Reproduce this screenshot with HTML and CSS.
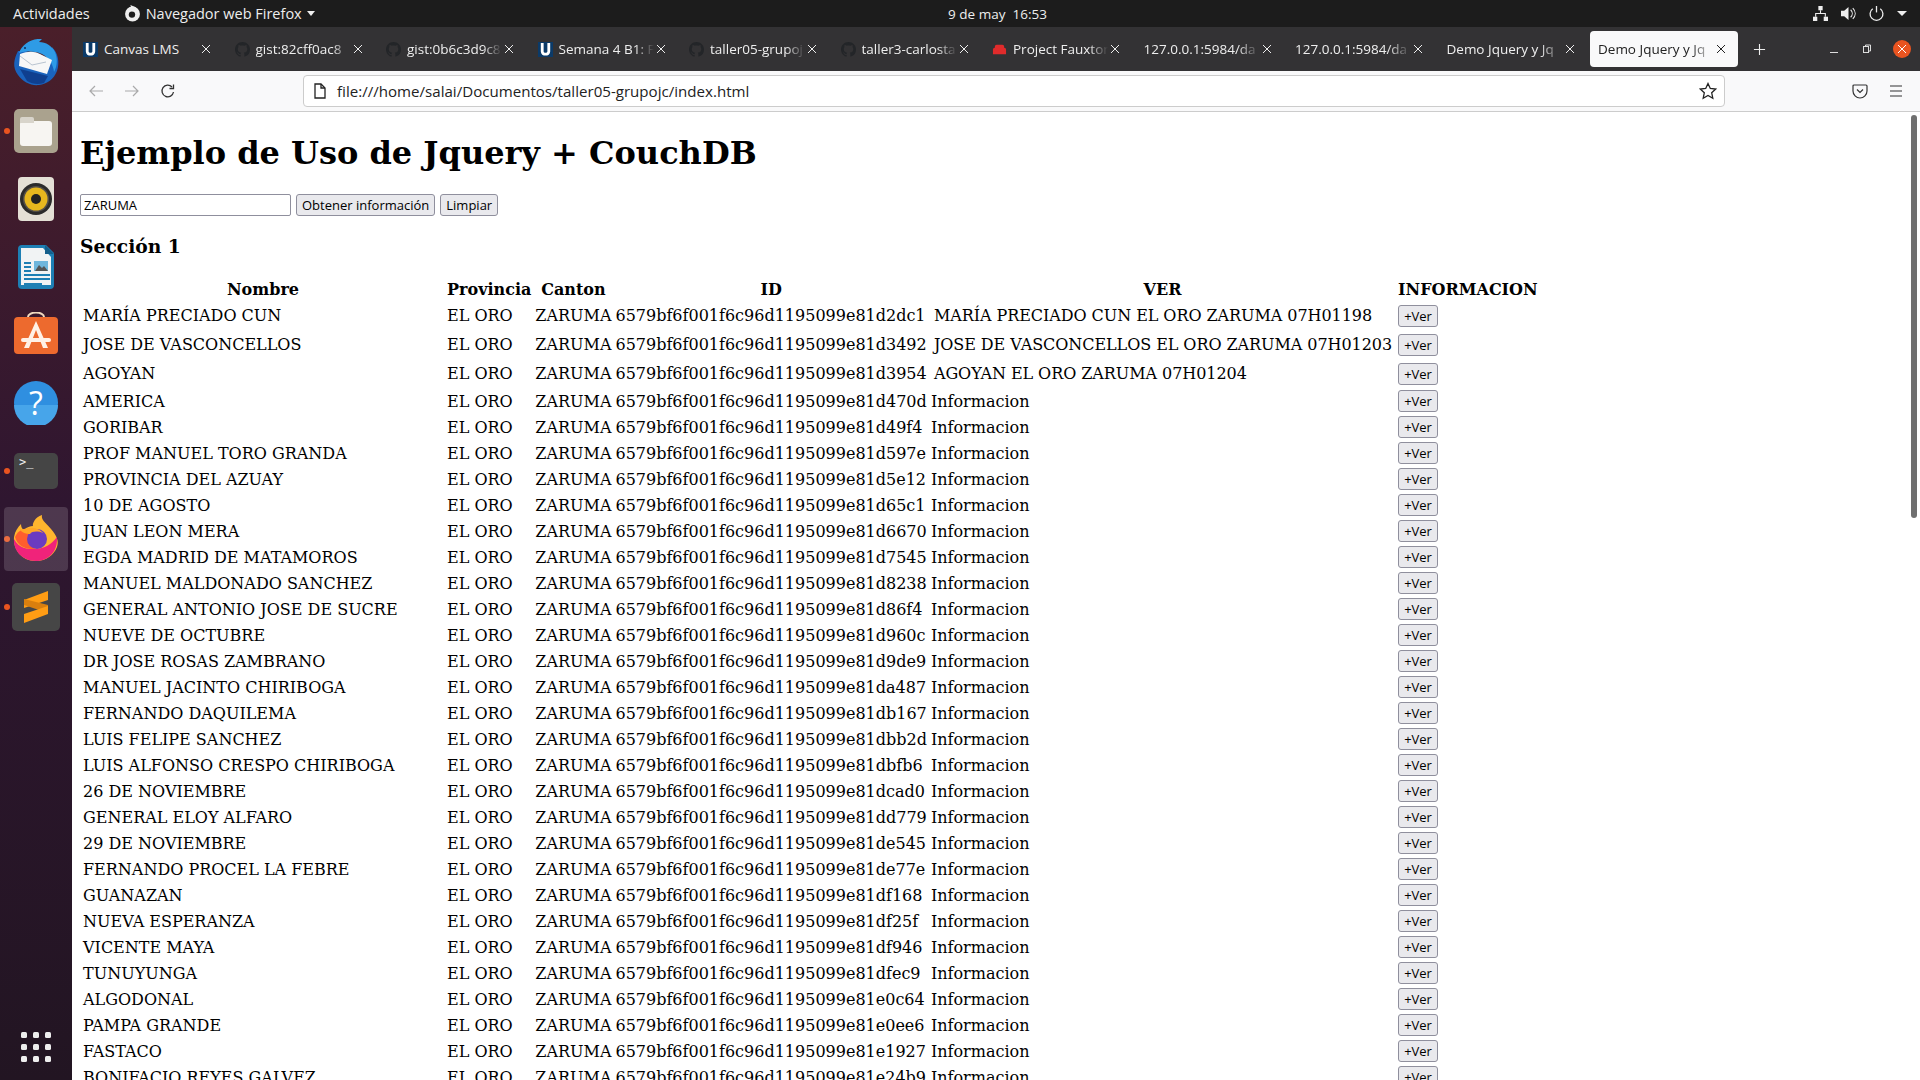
FILE: index.html
```html
<!DOCTYPE html>
<html lang="es">
<head>
  <meta charset="UTF-8" />
  <title>Demo Jquery y Json</title>
  <link rel="stylesheet" href="styles.css">
</head>
<body>
  <svg class="defs" width="0" height="0">
    <symbol id="close" viewBox="0 0 10 10"><path d="M1 1l8 8M9 1l-8 8" fill="none" stroke="currentColor"/></symbol>
    <symbol id="canvas" viewBox="0 0 16 16"><rect width="16" height="16" fill="#0b3a68"/><path d="M3 1h3v9c0 2 4 2 4 0V1h3v9c0 6-10 6-10 0z" fill="#fff"/></symbol>
    <symbol id="github" viewBox="0 0 16 16"><path fill="#232528" d="M8 0C3.58 0 0 3.58 0 8c0 3.54 2.29 6.53 5.47 7.59.4.07.55-.17.55-.38 0-.19-.01-.82-.01-1.49-2.01.37-2.53-.49-2.69-.94-.09-.23-.48-.94-.82-1.13-.28-.15-.68-.52-.01-.53.63-.01 1.08.58 1.23.82.72 1.21 1.87.87 2.33.66.07-.52.28-.87.51-1.07-1.78-.2-3.64-.89-3.64-3.95 0-.87.31-1.59.82-2.15-.08-.2-.36-1.02.08-2.12 0 0 .67-.21 2.2.82.64-.18 1.32-.27 2-.27.68 0 1.36.09 2 .27 1.53-1.04 2.2-.82 2.2-.82.44 1.1.16 1.92.08 2.12.51.56.82 1.27.82 2.15 0 3.07-1.87 3.75-3.65 3.95.29.25.54.73.54 1.48 0 1.07-.01 1.93-.01 2.2 0 .21.15.46.55.38A8.013 8.013 0 0016 8c0-4.42-3.58-8-8-8z"/></symbol>
  </svg>

  <header class="topbar">
    <div class="topbar-left">
      <span>Actividades</span>
      <span class="app-menu">
        <svg width="17" height="17" viewBox="0 0 16 16"><circle cx="8" cy="8.500" r="7" fill="#eee"/><circle cx="7.500" cy="9" r="3" fill="#1c1c1c"/><path d="M6 0l5 2-3 4z" fill="#eee"/></svg>
        Navegador web Firefox <i class="caret"></i>
      </span>
    </div>
    <div class="clock">9 de may&nbsp; 16:53</div>
    <div class="tray">
      <svg width="15" height="15" viewBox="0 0 14 14" fill="#eee"><rect x="5" y="0" width="4" height="4"/><rect x="0" y="10" width="4" height="4"/><rect x="10" y="10" width="4" height="4"/><path d="M6.500 4h1v2.500H12V10h-1V7.500H3V10H2V6.500h4.500z"/></svg>
      <svg width="15" height="15" viewBox="0 0 14 14" fill="#eee"><path d="M0 4.500h3L7 1v12L3 9.500H0z"/><path d="M9 3.500c2 2 2 5 0 7M11 2c3 3 3 7 0 10" fill="none" stroke="#eee"/></svg>
      <svg width="15" height="15" viewBox="0 0 14 14" fill="none" stroke="#eee" stroke-width="1.200"><path d="M7 0v6"/><path d="M3.500 2.500a6 6 0 1 0 7 0"/></svg>
      <i class="caret caret-wide"></i>
    </div>
  </header>

  <div class="desktop">
    <aside class="dock">
      <div class="dock-top">
        <div class="dock-item">
          <svg width="48" height="48" viewBox="0 0 48 48"><path d="M6 12C2 20 0 28 6 36c5 7 13 11 21 10 8-1 15-6 18-14 3-9 1-18-5-24L36 24 14 12z" fill="#1a63bd"/><path d="M7 14C10 5 20-1 30 0c-2 2-3 3-3 3 7 0 13 4 16 10 3 7 2 15-1 20-1-8-5-14-12-18-8-3-15-3-23-1z" fill="#2e9be6"/><path d="M8 15c8-3 14-3 20 0l12 6-5 14-28-8z" fill="#f7f7f7"/><path d="M8 17l12 9 14-3" fill="none" stroke="#b9c4d0"/><path d="M8 30l28 7-4 7c-6 2-12 1-17-2z" fill="#0f3f8f"/><circle cx="13" cy="9" r="1" fill="#0d2c5e"/></svg>
        </div>
        <div class="dock-item has-dot">
          <div class="tile tile-files"><div class="folder"></div></div>
        </div>
        <div class="dock-item">
          <svg width="36" height="44" viewBox="0 0 36 44"><rect width="36" height="44" rx="4" fill="#e4e0d6"/><circle cx="18" cy="22" r="16" fill="#2b2b2b"/><circle cx="18" cy="22" r="13" fill="#55504a"/><circle cx="18" cy="22" r="11.500" fill="#e6b71e"/><circle cx="18" cy="22" r="5" fill="#222"/></svg>
        </div>
        <div class="dock-item">
          <svg width="36" height="44" viewBox="0 0 36 44"><path d="M4 0h24l8 8v32a4 4 0 0 1-4 4H4a4 4 0 0 1-4-4V4a4 4 0 0 1 4-4z" fill="#1d7fb4"/><path d="M3 3h22l8 9v28H3z" fill="#f1f3f4"/><path d="M27 0l9 9h-9z" fill="#145f8b"/><path d="M6 17h7v2H6zM6 21h7v2H6zM6 25h7v2H6zM6 29h26v2H6zM6 33h26v2H6zM6 38h18v2H6z" fill="#1d7fb4"/><rect x="16" y="16" width="14" height="10" fill="#6fb6dc"/><path d="M17 26l4-6 3 3 2-2 4 5z" fill="#555"/></svg>
        </div>
        <div class="dock-item">
          <svg class="bag" width="46" height="42" viewBox="0 0 46 42"><path d="M15 6V5a8 4.500 0 0 1 16 0v1" fill="none" stroke="#f0d9bf" stroke-width="2"/><rect x="1" y="5" width="44" height="37" rx="4" fill="#ed6a2e"/><path d="M23 9L11 36h5l7-18 7 18h5z" fill="#fff1e6"/><rect x="8" y="26" width="30" height="4" rx="2" fill="#fff1e6"/></svg>
        </div>
        <div class="dock-item">
          <svg width="44" height="44" viewBox="0 0 44 44"><circle cx="22" cy="22" r="22" fill="#2f8fe0"/><path d="M0 24h44a22 22 0 0 1-44 0z" fill="#47a5ea"/><text x="22" y="34" text-anchor="middle" class="help-mark">?</text></svg>
        </div>
        <div class="dock-item has-dot">
          <div class="tile tile-term"><span class="prompt">&gt;_</span></div>
        </div>
        <div class="dock-item has-dot is-active">
          <svg class="fox" width="46" height="46" viewBox="0 0 46 46"><path d="M23 46C8 46 0 34 1 22 2 16 5 12 8 9c0 3 1 5 3 6 3-3 6-4 9-4-1-2 2-9 9-11-1 5 3 7 9 14 6 7 8 12 6 18-3 8-11 14-21 14z" fill="#ffb52e"/><path d="M23 46C9 46 0 35 1 24c5 10 14 10 20 10 10 0 17-4 23-12 1 14-8 24-21 24z" fill="#f0237a"/><path d="M2 22c3-7 8-8 12-8 6 0 10 3 14 7 3 6-2 13-9 13-8 0-15-4-17-12z" fill="#ff5d2e"/><circle cx="24" cy="24" r="10" fill="#6a3bc0"/><path d="M7 14c4 1 8-2 14-1 6 1 9 5 9 5-5-2-11-2-13 1-3 0-9-1-10-5z" fill="#ffa526"/></svg>
        </div>
        <div class="dock-item has-dot">
          <div class="tile tile-sublime">
            <svg width="26" height="32" viewBox="0 0 26 32"><path d="M25 0v9L1 17V9z" fill="#ff9d14"/><path d="M1 14l24 8v-8L1 8z" fill="#d97f0e"/><path d="M25 15v8L1 32v-9z" fill="#ff9d14"/></svg>
          </div>
        </div>
      </div>
      <div class="apps-grid">
        <i></i><i></i><i></i><i></i><i></i><i></i><i></i><i></i><i></i>
      </div>
    </aside>

    <div class="browser">
      <div class="tabstrip">
        <div class="tab"><svg class="fav"><use href="#canvas"/></svg><span class="tab-title">Canvas LMS</span><svg class="tab-x"><use href="#close"/></svg></div>
        <div class="tab"><svg class="fav"><use href="#github"/></svg><span class="tab-title fade">gist:82cff0ac8</span><svg class="tab-x"><use href="#close"/></svg></div>
        <div class="tab"><svg class="fav"><use href="#github"/></svg><span class="tab-title fade">gist:0b6c3d9c8</span><svg class="tab-x"><use href="#close"/></svg></div>
        <div class="tab"><svg class="fav"><use href="#canvas"/></svg><span class="tab-title fade">Semana 4 B1: F</span><svg class="tab-x"><use href="#close"/></svg></div>
        <div class="tab"><svg class="fav"><use href="#github"/></svg><span class="tab-title fade">taller05-grupoj</span><svg class="tab-x"><use href="#close"/></svg></div>
        <div class="tab"><svg class="fav"><use href="#github"/></svg><span class="tab-title fade">taller3-carlosta</span><svg class="tab-x"><use href="#close"/></svg></div>
        <div class="tab"><svg class="fav" viewBox="0 0 16 16"><path d="M1 8a2 2 0 0 1 2-2V5a2 2 0 0 1 2-2h6a2 2 0 0 1 2 2v1a2 2 0 0 1 2 2v5H1z" fill="#e02b2b"/></svg><span class="tab-title fade">Project Fauxton</span><svg class="tab-x"><use href="#close"/></svg></div>
        <div class="tab"><span class="tab-title fade">127.0.0.1:5984/da</span><svg class="tab-x"><use href="#close"/></svg></div>
        <div class="tab"><span class="tab-title fade">127.0.0.1:5984/da</span><svg class="tab-x"><use href="#close"/></svg></div>
        <div class="tab"><span class="tab-title fade">Demo Jquery y Jq</span><svg class="tab-x"><use href="#close"/></svg></div>
        <div class="tab is-current"><span class="tab-title fade">Demo Jquery y Jq</span><svg class="tab-x"><use href="#close"/></svg></div>
        <div class="new-tab">
          <svg width="13" height="13" viewBox="0 0 14 14" stroke="#eee" stroke-width="1.200"><path d="M7 1v12M1 7h12"/></svg>
        </div>
        <div class="win-controls">
          <svg class="win-min" width="10" height="10" viewBox="0 0 10 10" stroke="#ddd"><path d="M1 8.500h8"/></svg>
          <svg width="10" height="10" viewBox="0 0 10 10" fill="none" stroke="#ddd"><rect x="1.500" y="2.500" width="5" height="6"/><path d="M3.500 2.500v-1.500h5v6h-2"/></svg>
          <span class="win-close"><svg width="10" height="10"><use href="#close"/></svg></span>
        </div>
      </div>

      <div class="toolbar">
        <div class="nav-btns">
          <svg width="16" height="16" viewBox="0 0 16 16" fill="none" stroke="#aaa" stroke-width="1.200"><path d="M15 8H2M7 3L2 8l5 5"/></svg>
          <svg width="16" height="16" viewBox="0 0 16 16" fill="none" stroke="#aaa" stroke-width="1.200"><path d="M1 8h13M9 3l5 5-5 5"/></svg>
          <svg width="16" height="16" viewBox="0 0 16 16" fill="none" stroke="#333" stroke-width="1.300"><path d="M13.500 9a5.800 5.800 0 1 1-1.500-5"/><path d="M13.500 1.500v4h-4"/></svg>
        </div>
        <div class="urlbar">
          <svg width="14" height="16" viewBox="0 0 14 16" fill="none" stroke="#222" stroke-width="1.300"><path d="M2 1h6l4 4v10H2z"/><path d="M8 1v4h4"/></svg>
          <span class="url">file:///home/salai/Documentos/taller05-grupojc/index.html</span>
          <svg class="star" width="18" height="18" viewBox="0 0 18 18" fill="none" stroke="#222" stroke-width="1.300"><path d="M9 1.500l2.300 5 5.400.6-4 3.700 1.100 5.400L9 13.500l-4.800 2.700 1.100-5.400-4-3.700 5.400-.6z"/></svg>
        </div>
        <div class="tool-icons">
          <svg width="16" height="16" viewBox="0 0 16 16" fill="none" stroke="#333" stroke-width="1.200"><path d="M2 2h12a1 1 0 0 1 1 1v5a7 7 0 0 1-14 0V3a1 1 0 0 1 1-1z"/><path d="M5 6.500l3 3 3-3"/></svg>
          <svg width="14" height="16" viewBox="0 0 14 16" stroke="#333" stroke-width="1.200"><path d="M1 3h12M1 8h12M1 13h12"/></svg>
        </div>
      </div>

      <div class="viewport">
        <main class="page">
          <h1>Ejemplo de Uso de Jquery + CouchDB</h1>
          <div class="controls">
            <input class="search" type="text" value="ZARUMA" />
            <button>Obtener información</button>
            <button>Limpiar</button>
          </div>
          <h3>Sección 1</h3>
          <table>
            <thead>
              <tr>
                <th class="col-name">Nombre</th>
                <th>Provincia</th>
                <th>Canton</th>
                <th>ID</th>
                <th>VER</th>
                <th>INFORMACION</th>
              </tr>
            </thead>
            <tbody id="rows"></tbody>
          </table>
        </main>
        <div class="scrollbar"><div class="thumb"></div></div>
      </div>
    </div>
  </div>

  <script>
    var data = [
      ['MARÍA PRECIADO CUN', 'd2dc1', 'MARÍA PRECIADO CUN EL ORO ZARUMA 07H01198'],
      ['JOSE DE VASCONCELLOS', 'd3492', 'JOSE DE VASCONCELLOS EL ORO ZARUMA 07H01203'],
      ['AGOYAN', 'd3954', 'AGOYAN EL ORO ZARUMA 07H01204'],
      ['AMERICA', 'd470d'],
      ['GORIBAR', 'd49f4'],
      ['PROF MANUEL TORO GRANDA', 'd597e'],
      ['PROVINCIA DEL AZUAY', 'd5e12'],
      ['10 DE AGOSTO', 'd65c1'],
      ['JUAN LEON MERA', 'd6670'],
      ['EGDA MADRID DE MATAMOROS', 'd7545'],
      ['MANUEL MALDONADO SANCHEZ', 'd8238'],
      ['GENERAL ANTONIO JOSE DE SUCRE', 'd86f4'],
      ['NUEVE DE OCTUBRE', 'd960c'],
      ['DR JOSE ROSAS ZAMBRANO', 'd9de9'],
      ['MANUEL JACINTO CHIRIBOGA', 'da487'],
      ['FERNANDO DAQUILEMA', 'db167'],
      ['LUIS FELIPE SANCHEZ', 'dbb2d'],
      ['LUIS ALFONSO CRESPO CHIRIBOGA', 'dbfb6'],
      ['26 DE NOVIEMBRE', 'dcad0'],
      ['GENERAL ELOY ALFARO', 'dd779'],
      ['29 DE NOVIEMBRE', 'de545'],
      ['FERNANDO PROCEL LA FEBRE', 'de77e'],
      ['GUANAZAN', 'df168'],
      ['NUEVA ESPERANZA', 'df25f'],
      ['VICENTE MAYA', 'df946'],
      ['TUNUYUNGA', 'dfec9'],
      ['ALGODONAL', 'e0c64'],
      ['PAMPA GRANDE', 'e0ee6'],
      ['FASTACO', 'e1927'],
      ['BONIFACIO REYES GALVEZ', 'e24b9']
    ];

    var html = '';
    data.forEach(function (r) {
      var open = r[2] ? ' class="is-open"' : '';
      html += '<tr' + open + '><td>' + r[0] + '</td><td>EL ORO</td><td>ZARUMA</td>' +
        '<td>6579bf6f001f6c96d1195099e81' + r[1] + '</td>' +
        '<td>' + (r[2] || 'Informacion') + '</td><td><button>+Ver</button></td></tr>';
    });
    document.getElementById('rows').innerHTML = html;
  </script>
</body>
</html>
```

FILE: styles.css
```css
html, body {
  margin: 0;
  height: 1080px;
  overflow: hidden;
}

body {
  font-family: "Open Sans", "Noto Sans", sans-serif;
  background: #fff;
}

.defs {
  position: absolute;
}

.topbar {
  height: 27px;
  background: #1c1c1c;
  color: #eee;
  font-size: 14.500px;
  display: grid;
  grid-template-columns: 1fr auto 1fr;
  align-items: center;
  padding: 0 12px 0 13px;
}

.topbar-left {
  display: flex;
  gap: 34px;
  align-items: center;
}

.app-menu {
  display: flex;
  align-items: center;
  gap: 5px;
}

.caret {
  display: inline-block;
  border-left: 4px solid transparent;
  border-right: 4px solid transparent;
  border-top: 5px solid #eee;
}

.caret-wide {
  border-left-width: 5px;
  border-right-width: 5px;
}

.clock {
  font-size: 13.500px;
  margin-left: 74px;
}

.tray {
  display: flex;
  justify-content: flex-end;
  gap: 13px;
  align-items: center;
  padding-right: 1px;
}

.desktop {
  display: flex;
  height: 1053px;
}

.dock {
  width: 72px;
  flex: none;
  background: linear-gradient(#4a1f2a, #2f1630 45%, #221522);
  display: flex;
  flex-direction: column;
  justify-content: space-between;
  align-items: center;
  padding: 2px 0 18px;
  box-sizing: border-box;
}

.dock-top {
  display: flex;
  flex-direction: column;
  width: 100%;
}

.dock-item {
  height: 68px;
  display: flex;
  align-items: center;
  justify-content: center;
  position: relative;
}

.bag {
  margin-bottom: 5px;
}

.has-dot::before {
  content: "";
  position: absolute;
  left: 4px;
  top: 31px;
  width: 6px;
  height: 6px;
  border-radius: 50%;
  background: #e95420;
}

.is-active::after {
  content: "";
  position: absolute;
  left: 4px;
  right: 4px;
  top: 2px;
  bottom: 2px;
  border-radius: 4px;
  background: rgba(255, 255, 255, 0.15);
}

.is-active svg {
  position: relative;
  z-index: 1;
}

.fox {
  margin-bottom: 2px;
}

.tile {
  width: 44px;
  height: 44px;
  border-radius: 5px;
  display: flex;
  align-items: center;
  justify-content: center;
}

.tile-files {
  background: #aaa28e;
}

.folder {
  width: 32px;
  height: 25px;
  margin-top: 5px;
  background: #f7f5f2;
  border-radius: 3px;
  position: relative;
}

.folder::before {
  content: "";
  position: absolute;
  left: 0;
  top: -4px;
  width: 14px;
  height: 6px;
  border-radius: 2px 2px 0 0;
  background: #d8d4cb;
}

.tile-term {
  height: 36px;
  background: #454545;
  color: #eee;
  align-items: flex-start;
  justify-content: flex-start;
  padding: 2px 5px;
  box-sizing: border-box;
  font-size: 12px;
}

.prompt {
  font-family: "DejaVu Sans Mono", monospace;
}

.tile-sublime {
  width: 48px;
  height: 48px;
  background: #464646;
}

.help-mark {
  font-family: "Open Sans", sans-serif;
  font-size: 32px;
  fill: #fff;
}

.apps-grid {
  display: grid;
  grid-template-columns: repeat(3, 6px);
  gap: 6px;
}

.apps-grid i {
  width: 6px;
  height: 6px;
  border-radius: 1.500px;
  background: #eee;
}

.browser {
  flex: 1;
  min-width: 0;
  display: flex;
  flex-direction: column;
}

.tabstrip {
  height: 44px;
  background: #333234;
  display: flex;
  align-items: center;
  gap: 3.500px;
  padding: 0 0 0 3px;
  box-sizing: border-box;
  flex: none;
}

.tab {
  width: 148px;
  height: 36px;
  box-sizing: border-box;
  display: flex;
  align-items: center;
  padding: 0 12px 0 8px;
  gap: 2px;
  color: #eee;
  font-size: 13.500px;
  flex: none;
}

.tab.is-current {
  background: #f9f9fa;
  color: #222;
  border-radius: 4px;
}

.fav {
  width: 15px;
  height: 15px;
  margin-right: 4px;
  flex: none;
}

.tab-title {
  flex: 1;
  min-width: 0;
  overflow: hidden;
  white-space: nowrap;
}

.tab-title.fade {
  -webkit-mask-image: linear-gradient(to right, #000 80%, transparent);
  mask-image: linear-gradient(to right, #000 80%, transparent);
}

.tab-x {
  width: 10px;
  height: 10px;
  flex: none;
}

.new-tab {
  margin-left: 11px;
  display: flex;
}

.win-controls {
  margin-left: auto;
  display: flex;
  align-items: center;
  gap: 21px;
  padding-right: 9px;
}

.win-min {
  margin-right: 2px;
}

.win-close {
  width: 18px;
  height: 18px;
  border-radius: 50%;
  background: #e95420;
  color: #fff;
  display: flex;
  align-items: center;
  justify-content: center;
}

.toolbar {
  height: 41px;
  background: #f9f9fa;
  border-bottom: 1px solid #ccc;
  box-sizing: border-box;
  display: flex;
  align-items: center;
  flex: none;
}

.nav-btns {
  display: flex;
  gap: 20px;
  padding-left: 16px;
  width: 231px;
  box-sizing: border-box;
}

.urlbar {
  width: 1422px;
  height: 32px;
  box-sizing: border-box;
  background: #fff;
  border: 1px solid #ccc;
  border-radius: 4px;
  display: flex;
  align-items: center;
  gap: 10px;
  padding: 0 7px 0 9px;
  font-size: 15.100px;
  color: #222;
}

.url {
  flex: 1;
}

.tool-icons {
  display: flex;
  align-items: center;
  gap: 21px;
  margin-left: 127px;
}

.viewport {
  flex: 1;
  display: flex;
  min-height: 0;
  overflow: hidden;
}

.page {
  flex: 1;
  padding: 8px;
  font-family: "DejaVu Serif", serif;
  color: #000;
  min-width: 0;
}

.page h1 {
  margin: 15px 0 22px;
  font-size: 32px;
  line-height: 37px;
}

.controls {
  display: flex;
  align-items: center;
  gap: 5px;
}

.search {
  width: 211px;
  height: 22px;
  box-sizing: border-box;
  padding: 1px 3px;
  border: 1px solid #8f8f9d;
  border-radius: 2px;
  font: 13px "Open Sans", sans-serif;
}

button {
  height: 22px;
  padding: 0 5px;
  border: 1px solid #8f8f9d;
  border-radius: 3px;
  background: #e9e9ed;
  font: 13px "Open Sans", sans-serif;
  color: #000;
}

.page h3 {
  margin: 19px 0 20px;
  font-size: 18.700px;
  line-height: 22px;
}

table {
  font-size: 16px;
  border-spacing: 2px;
}

th {
  padding: 1px;
  line-height: 19px;
  text-align: center;
}

th:nth-child(6) {
  text-align: left;
}

.col-name {
  width: 360px;
}

td {
  padding: 1px;
  line-height: 19px;
  white-space: nowrap;
}

td button {
  width: 40px;
  padding: 0;
  display: block;
}

.is-open td {
  padding: 4px 1px;
}

.is-open td:nth-child(5) {
  padding: 4px 3px 4px 4px;
  letter-spacing: -0.060px;
}

.is-open td:last-child {
  padding: 1px;
}

.scrollbar {
  width: 12px;
  flex: none;
  background: #fff;
  display: flex;
  justify-content: center;
}

.thumb {
  width: 6px;
  height: 403px;
  margin-top: 3px;
  border-radius: 3px;
  background: #6f6f6f;
}
```
